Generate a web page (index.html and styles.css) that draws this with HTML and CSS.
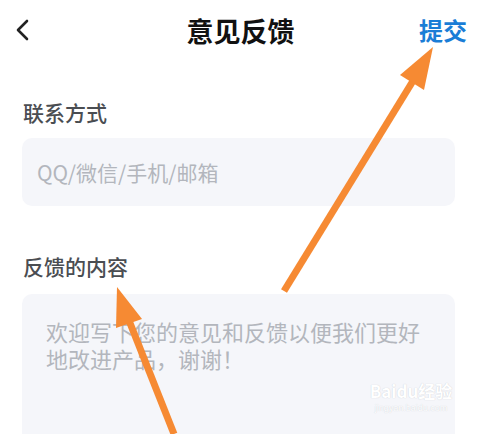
FILE: index.html
```html
<!DOCTYPE html>
<html>

<head>
  <meta charset='utf-8'>
  <title>意见反馈</title>
  <meta name='viewport' content='width=device-width, initial-scale=1'>
  <link rel="stylesheet" href="styles.css">
</head>

<body>
  <header class="topbar">
    <svg class="back" width="16" height="22" viewBox="0 0 16 22">
      <path d="M13 2 L4 11 L13 20" fill="none" stroke="#222" stroke-width="2.6" stroke-linecap="round" stroke-linejoin="round" />
    </svg>
    <h1>意见反馈</h1>
    <a class="submit">提交</a>
  </header>

  <main class="form">
    <label class="field-label">联系方式</label>
    <input class="contact" placeholder="QQ/微信/手机/邮箱">

    <label class="field-label second">反馈的内容</label>
    <div class="content-box">
      <textarea class="content" placeholder="欢迎写下您的意见和反馈以便我们更好地改进产品，谢谢！"></textarea>
      <div class="watermark">
        <span class="wm-logo">Baidu经验</span>
        <span class="wm-url">jingyan.baidu.com</span>
      </div>
    </div>
  </main>

  <!-- annotation arrows -->
  <svg class="arrows" width="483" height="434" viewBox="0 0 483 434">
    <line x1="284" y1="291" x2="416" y2="76" stroke="#f68a33" stroke-width="7" />
    <polygon points="433,47 424,90 400,75" fill="#f68a33" />
    <line x1="174" y1="434" x2="128" y2="318" stroke="#f68a33" stroke-width="7" />
    <polygon points="117,287 142,319 116,328" fill="#f68a33" />
  </svg>
</body>

</html>
```

FILE: styles.css
```css
* {
  box-sizing: border-box;
  margin: 0;
  padding: 0;
  font-family: "Noto Sans CJK SC", "Noto Sans", sans-serif;
}

body {
  background-color: #fff;
  width: 483px;
  height: 434px;
  overflow: hidden;
  position: relative;
}

.topbar {
  height: 60px;
  display: grid;
  grid-template-columns: 1fr auto 1fr;
  align-items: center;
  padding: 0 16px 0 14px;
}

.back {
  display: block;
}

h1 {
  font-size: 27px;
  font-weight: 700;
  color: #111;
  line-height: 1;
}

.submit {
  justify-self: end;
  font-size: 24px;
  font-weight: 700;
  color: #1a7dd6;
  line-height: 1;
}

.form {
  padding: 0 28px 0 22px;
  display: flex;
  flex-direction: column;
}

.field-label {
  display: block;
  font-size: 21px;
  line-height: 30px;
  color: #4a4d52;
  font-weight: 500;
  margin-top: 37px;
  padding-left: 1px;
}

.field-label.second {
  margin-top: 45px;
}

.contact {
  margin-top: 11px;
  height: 68px;
  width: 100%;
  border: none;
  outline: none;
  border-radius: 10px;
  background-color: #f5f6fa;
  padding: 0 15px;
  font-size: 21px;
  color: #333;
}

.contact::placeholder,
.content::placeholder {
  color: #b3b6bd;
}

.content-box {
  margin-top: 13px;
  height: 140px;
  border-radius: 10px 10px 0 0;
  background-color: #f5f6fa;
  position: relative;
}

.content {
  display: block;
  width: 100%;
  height: 100%;
  border: none;
  outline: none;
  resize: none;
  background: transparent;
  padding: 24px 24px 0 24px;
  font-size: 22px;
  line-height: 27px;
  color: #333;
}

.watermark {
  position: absolute;
  left: 344px;
  top: 86px;
  width: 90px;
  display: flex;
  flex-direction: column;
  align-items: center;
  white-space: nowrap;
  color: #fff;
  text-shadow: 0 0 1px #c4c7cd;
}

.wm-logo {
  font-size: 17px;
  font-weight: 700;
  line-height: 22px;
}

.wm-url {
  font-family: "Liberation Sans", sans-serif;
  font-size: 9px;
  line-height: 12px;
}

.arrows {
  position: absolute;
  left: 0;
  top: 0;
  pointer-events: none;
}
```
